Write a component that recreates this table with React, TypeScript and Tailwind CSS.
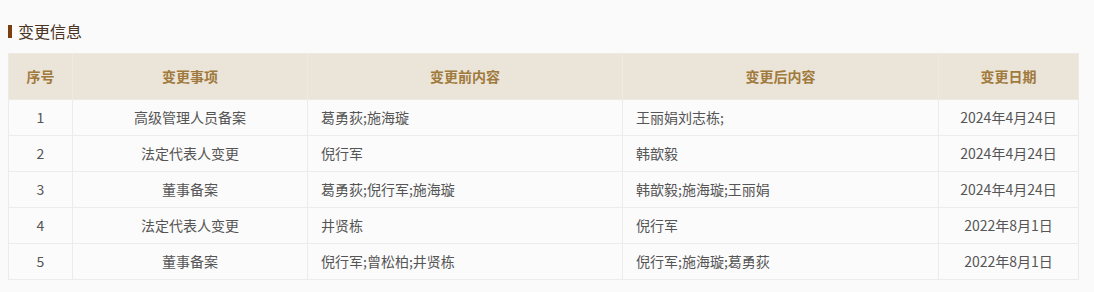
import React from 'react';

const rows = [
    { no: 1, item: '高级管理人员备案', before: '葛勇荻;施海璇', after: '王丽娟刘志栋;', date: '2024年4月24日' },
    { no: 2, item: '法定代表人变更', before: '倪行军', after: '韩歆毅', date: '2024年4月24日' },
    { no: 3, item: '董事备案', before: '葛勇荻;倪行军;施海璇', after: '韩歆毅;施海璇;王丽娟', date: '2024年4月24日' },
    { no: 4, item: '法定代表人变更', before: '井贤栋', after: '倪行军', date: '2022年8月1日' },
    { no: 5, item: '董事备案', before: '倪行军;曾松柏;井贤栋', after: '倪行军;施海璇;葛勇荻', date: '2022年8月1日' },
];

const App = () => {
    return (
        <div
            className="min-h-screen bg-[#fafafa] px-2 pt-[20px] text-[14px] text-[#555]"
            style={{ fontFamily: '"Noto Sans CJK SC", "Noto Sans", sans-serif' }}
        >
            <div className="flex h-[22px] items-center">
                <span className="mr-[6px] h-[13px] w-[4px] bg-[#7a3e0f]" />
                <span className="text-[16px] leading-[22px] text-[#4a3424]">变更信息</span>
            </div>

            <table className="mt-[11px] w-[1070px] table-fixed border-collapse">
                <colgroup>
                    <col className="w-[64px]" />
                    <col className="w-[235px]" />
                    <col className="w-[315px]" />
                    <col className="w-[316px]" />
                    <col className="w-[140px]" />
                </colgroup>
                <thead>
                    <tr className="h-[46px] bg-[#ebe4d8] text-[#a07a3c]">
                        <th className="border border-[#eeeae3] font-bold">序号</th>
                        <th className="border border-[#eeeae3] font-bold">变更事项</th>
                        <th className="border border-[#eeeae3] font-bold">变更前内容</th>
                        <th className="border border-[#eeeae3] font-bold">变更后内容</th>
                        <th className="border border-[#eeeae3] font-bold">变更日期</th>
                    </tr>
                </thead>
                <tbody>
                    {rows.map((r) => (
                        <tr key={r.no} className="h-[36px] bg-[#fbfbfb]">
                            <td className="border border-[#ececec] text-center">{r.no}</td>
                            <td className="border border-[#ececec] text-center">{r.item}</td>
                            <td className="border border-[#ececec] px-[13px]">{r.before}</td>
                            <td className="border border-[#ececec] px-[13px]">{r.after}</td>
                            <td className="border border-[#ececec] text-center">{r.date}</td>
                        </tr>
                    ))}
                </tbody>
            </table>
        </div>
    );
};

export default App;
